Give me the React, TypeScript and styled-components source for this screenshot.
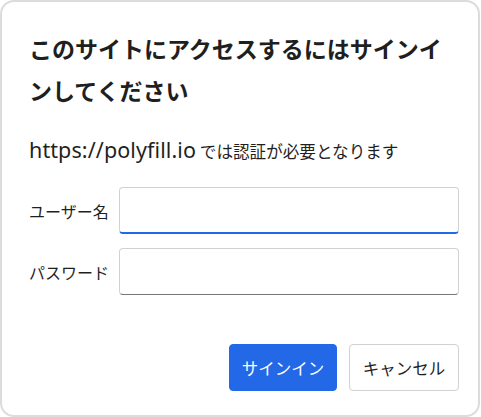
import React from 'react'
import styled, { createGlobalStyle } from 'styled-components'

const GlobalStyle = createGlobalStyle`
  html, body {
    margin: 0;
    padding: 0;
    background: #ffffff;
  }
  body {
    font-family: "Noto Sans", "Noto Sans CJK JP", sans-serif;
    color: #1f1f1f;
  }
`

const Dialog = styled.div`
  box-sizing: border-box;
  width: 480px;
  height: 417px;
  border: 2px solid #dcdcdc;
  border-radius: 14px;
  background: #ffffff;
  padding: 25px 19px 0 27px;
  display: flex;
  flex-direction: column;
`

const Title = styled.h1`
  margin: 0;
  font-family: "Noto Sans CJK JP", sans-serif;
  font-size: 23px;
  font-weight: 700;
  line-height: 42px;
  color: #1f1f1f;
`

const Message = styled.p`
  margin: 27px 0 0;
  font-family: "Noto Sans CJK JP", sans-serif;
  font-size: 16.6px;
  line-height: 24px;
  height: 24px;
  color: #1f1f1f;
  white-space: nowrap;
`

// the host part is drawn in the wider latin UI face
const Host = styled.span`
  font-family: "Noto Sans", sans-serif;
  font-size: 21.5px;
  letter-spacing: 0.1px;
`

const Form = styled.div`
  margin-top: 25px;
  display: grid;
  grid-template-columns: 90px 1fr;
  row-gap: 14px;
  align-items: center;
`

const Label = styled.label`
  font-family: "Noto Sans CJK JP", sans-serif;
  font-size: 16px;
  color: #1f1f1f;
`

const Field = styled.input<{ $focused?: boolean }>`
  box-sizing: border-box;
  height: 47px;
  width: 100%;
  border: 1px solid #d2d2d2;
  border-bottom: ${p => (p.$focused ? '2px solid #2368e7' : '1px solid #777777')};
  border-radius: 4px;
  background: #ffffff;
  outline: none;
  padding: 0 10px;
  font-size: 16px;
`

const Actions = styled.div`
  margin-top: 49px;
  display: flex;
  justify-content: flex-end;
  gap: 12px;
`

const Button = styled.button<{ $primary?: boolean }>`
  box-sizing: border-box;
  height: 47px;
  width: ${p => (p.$primary ? '108px' : '110px')};
  padding: 0;
  border-radius: 4px;
  font-family: "Noto Sans CJK JP", sans-serif;
  font-size: 16.5px;
  cursor: pointer;
  border: 1px solid ${p => (p.$primary ? '#2368e7' : '#d2d2d2')};
  background: ${p => (p.$primary ? '#2368e7' : '#ffffff')};
  color: ${p => (p.$primary ? '#ffffff' : '#1f1f1f')};
`

const App = () => {
  return (
    <>
      <GlobalStyle />
      <Dialog>
        <Title>このサイトにアクセスするにはサインインしてください</Title>
        <Message>
          <Host>https://polyfill.io</Host> では認証が必要となります
        </Message>
        <Form>
          <Label>ユーザー名</Label>
          <Field $focused />
          <Label>パスワード</Label>
          <Field type="password" />
        </Form>
        <Actions>
          <Button $primary>サインイン</Button>
          <Button>キャンセル</Button>
        </Actions>
      </Dialog>
    </>
  )
}

export default App
